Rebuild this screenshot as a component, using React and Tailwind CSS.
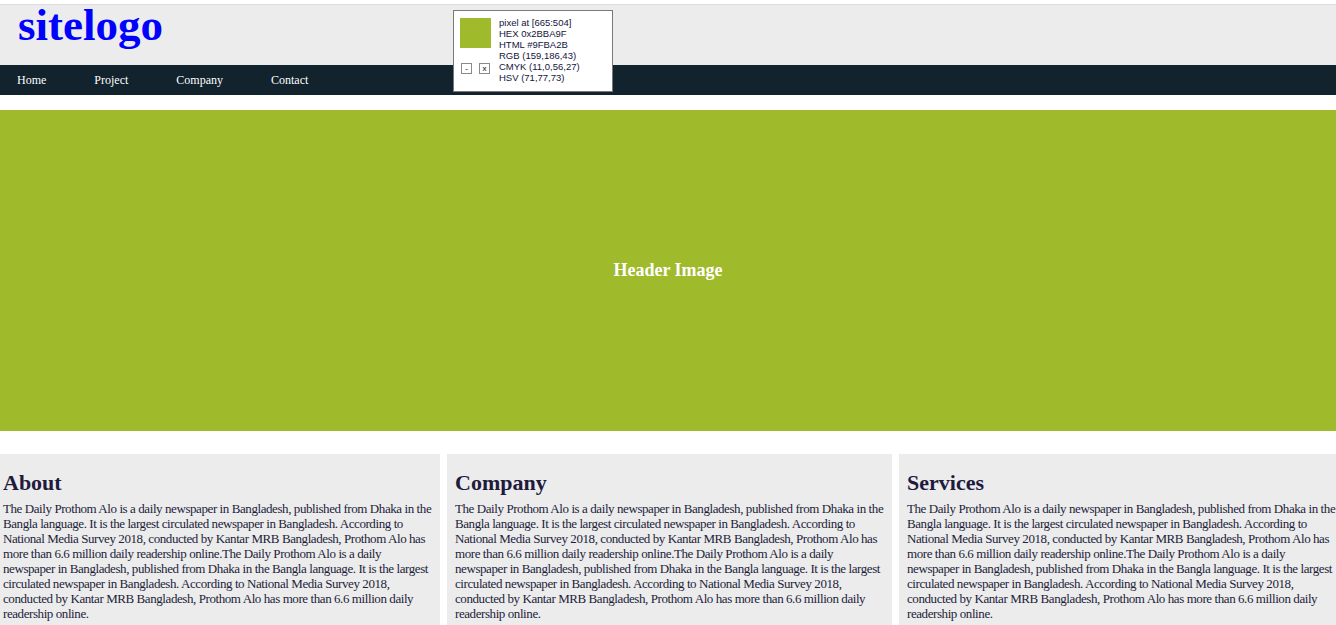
import React from "react";

const para =
  "The Daily Prothom Alo is a daily newspaper in Bangladesh, published from Dhaka in the Bangla language. It is the largest circulated newspaper in Bangladesh. According to National Media Survey 2018, conducted by Kantar MRB Bangladesh, Prothom Alo has more than 6.6 million daily readership online.The Daily Prothom Alo is a daily newspaper in Bangladesh, published from Dhaka in the Bangla language. It is the largest circulated newspaper in Bangladesh. According to National Media Survey 2018, conducted by Kantar MRB Bangladesh, Prothom Alo has more than 6.6 million daily readership online.";

const navItems = ["Home", "Project", "Company", "Contact"];

const columns = [
  { title: "About", pad: "pl-[3px] pr-[6px]" },
  { title: "Company", pad: "pl-2 pr-[6px]" },
  { title: "Services", pad: "pl-2 pr-[6px]" },
];

function ColorPicker() {
  // screen colour picker window sitting over the page
  return (
    <div className="absolute left-[453px] top-[10px] w-[160px] h-[82px] bg-white border border-[#7a7a7a] font-['Liberation_Sans',sans-serif] text-[9.5px] leading-[11px] text-[#14143c]">
      <div className="flex pl-[6px] pt-[7px]">
        <div className="flex flex-col">
          <div className="w-[31px] h-[30px] bg-[#9fba2b]" />
          <div className="flex gap-[7px] mt-[15px] ml-[1px]">
            <div className="w-[11px] h-[11px] border border-[#8a8a8a] flex items-center justify-center text-[8px] leading-none text-black">-</div>
            <div className="w-[11px] h-[11px] border border-[#8a8a8a] flex items-center justify-center text-[8px] leading-none text-black">x</div>
          </div>
        </div>
        <div className="ml-[8px] -mt-[1px]">
          <div>pixel at [665:504]</div>
          <div>HEX 0x2BBA9F</div>
          <div>HTML #9FBA2B</div>
          <div>RGB (159,186,43)</div>
          <div>CMYK (11,0,56,27)</div>
          <div>HSV (71,77,73)</div>
        </div>
      </div>
    </div>
  );
}

export default function App() {
  return (
    <div className="relative min-h-screen bg-white overflow-hidden font-['Liberation_Serif',serif] pt-1">
      {/* Header */}
      <div className="border-t border-[#dcdcdc] bg-[#ececec] h-[61px]">
        <h1 className="pl-[18px] text-[45px] leading-[40px] font-bold text-[#0000ff]">sitelogo</h1>
      </div>

      {/* Nav */}
      <nav className="bg-[#12232e] h-[30px]">
        <ul className="flex gap-12 pl-[17px]">
          {navItems.map((item) => (
            <li key={item} className="text-white text-[12px] leading-[30px]">
              {item}
            </li>
          ))}
        </ul>
      </nav>

      {/* Banner */}
      <div className="mt-[15px] h-[321px] bg-[#9fba2b] flex items-center justify-center">
        <h3 className="text-white font-bold text-[18px]">Header Image</h3>
      </div>

      {/* Columns */}
      <div className="mt-[23px] grid grid-cols-[440px_445px_445px] gap-[7px]">
        {columns.map((col) => (
          <div key={col.title} className={`bg-[#ececec] pt-4 pb-3 ${col.pad}`}>
            <h2 className="text-[22px] leading-[25px] font-bold text-[#201a3c] mb-[6px]">{col.title}</h2>
            <p className="w-[431px] text-[13px] leading-[15px] tracking-[-0.42px] text-[#221d3a]">{para}</p>
          </div>
        ))}
      </div>

      <ColorPicker />
    </div>
  );
}
